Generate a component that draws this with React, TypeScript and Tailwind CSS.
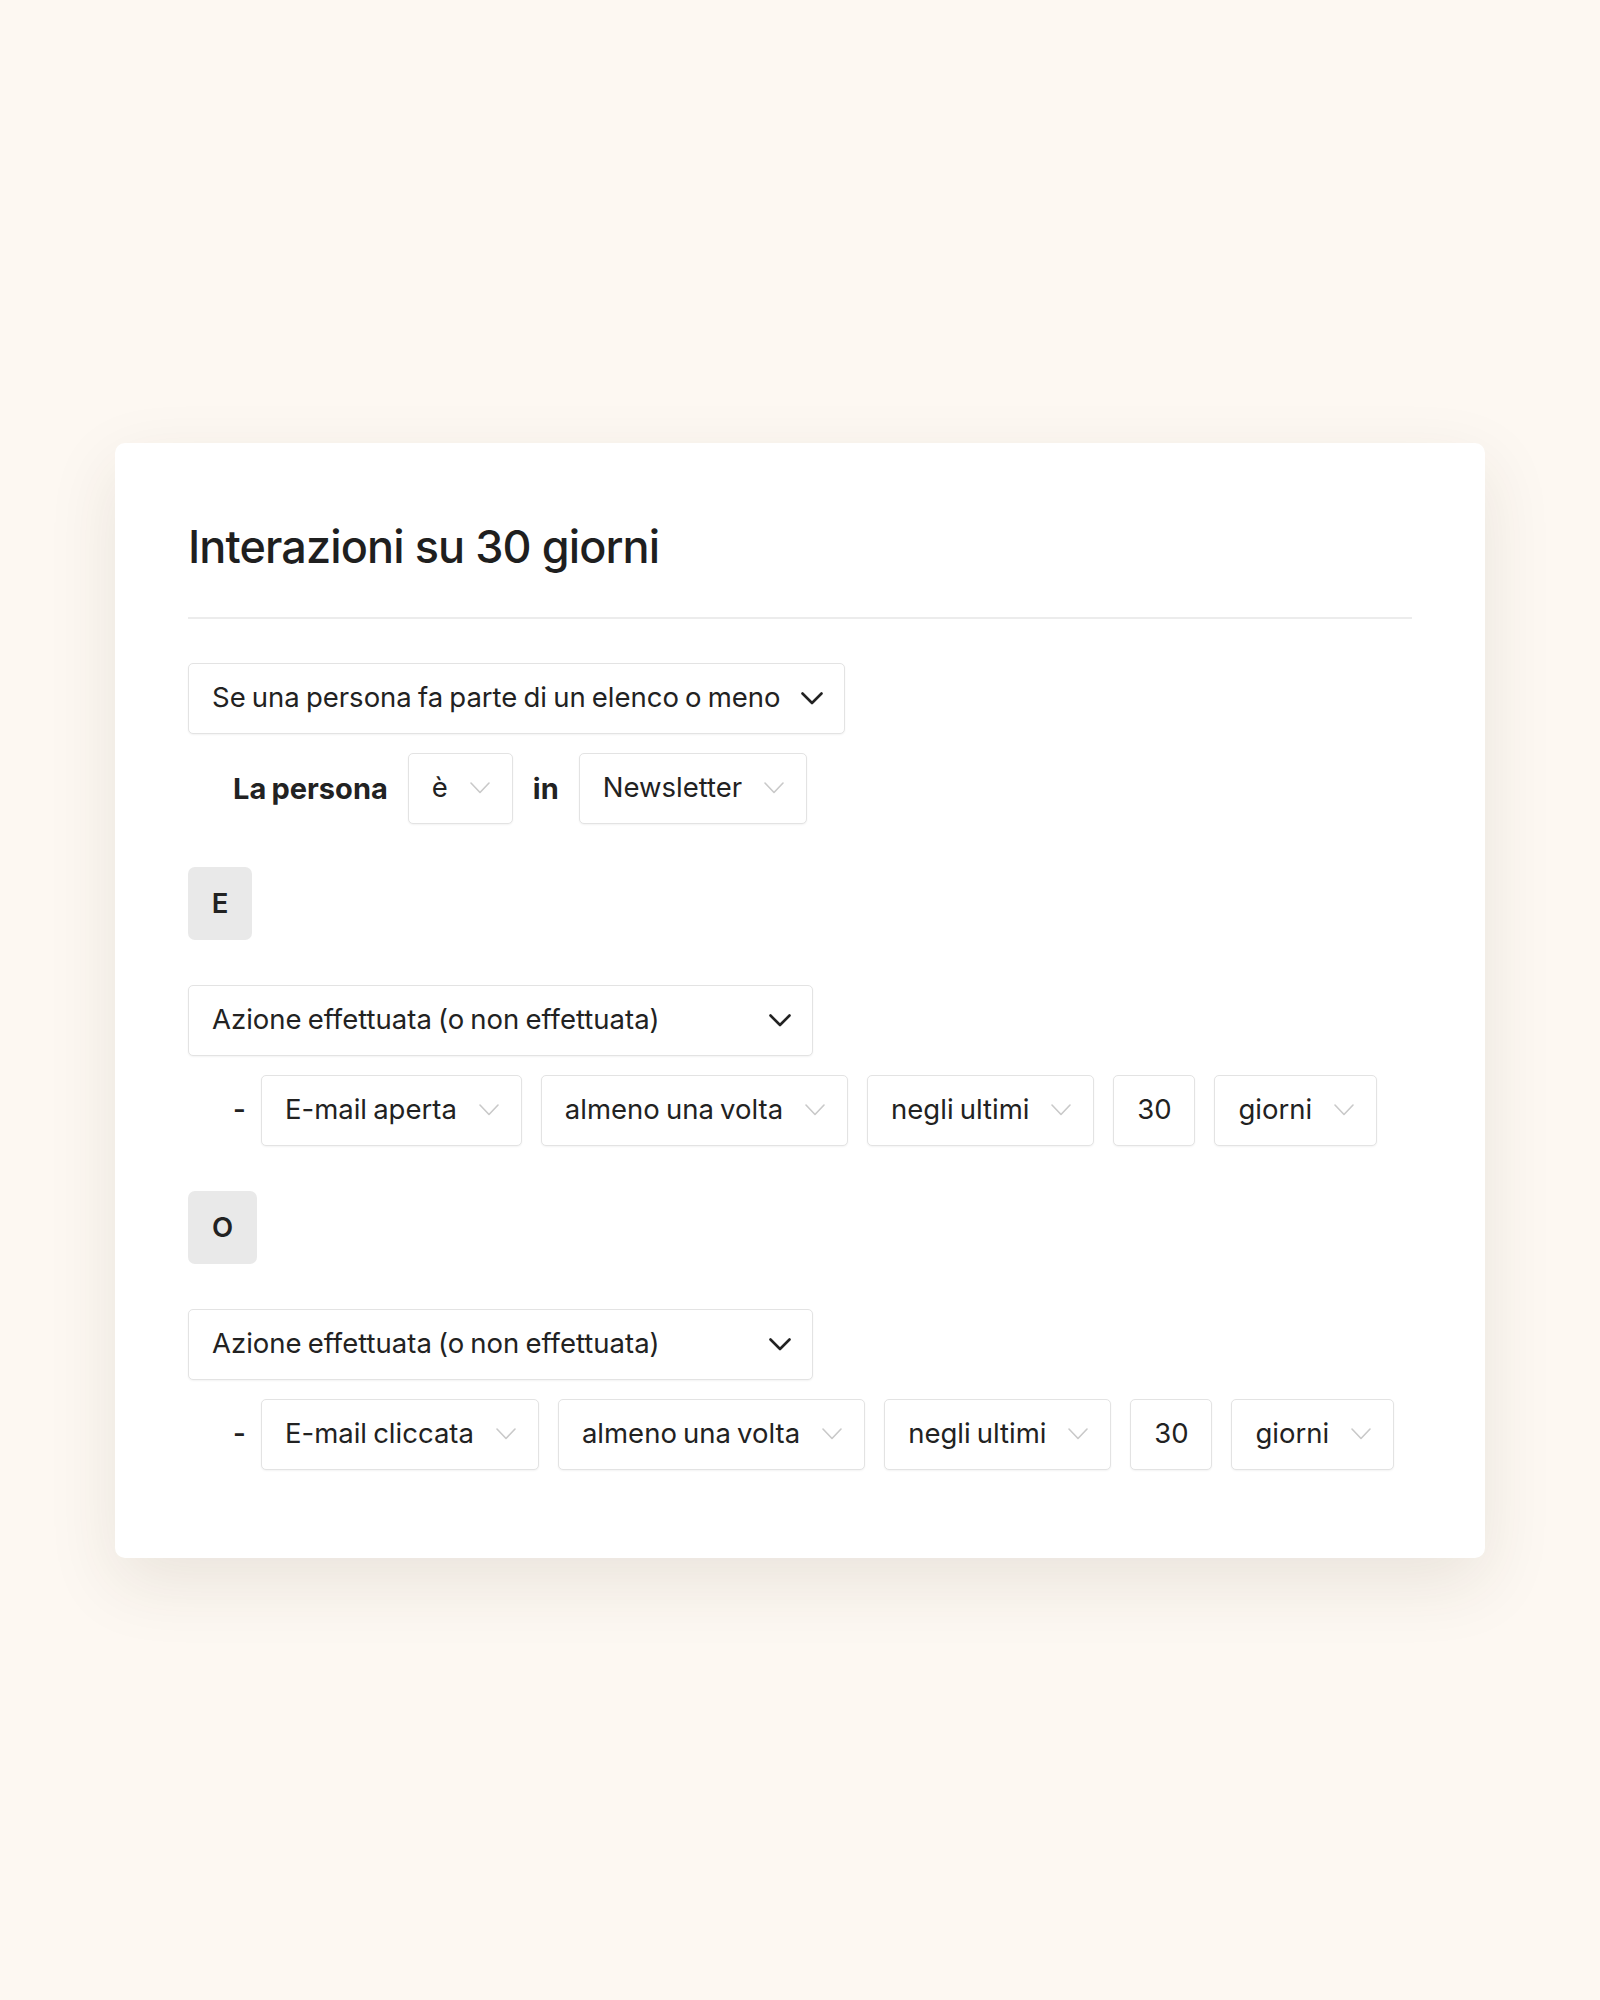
const font = "font-['Inter','Liberation_Sans',sans-serif]";

function Chevron({ light = false }: { light?: boolean }) {
  if (light) {
    return (
      <svg width="20" height="12" viewBox="0 0 20 12" fill="none" className="shrink-0">
        <polyline points="1,1 10,10.5 19,1" stroke="#c9c9c9" strokeWidth="1.6" strokeLinecap="round" strokeLinejoin="round" />
      </svg>
    );
  }
  return (
    <svg width="22" height="13" viewBox="0 0 22 13" fill="none" className="shrink-0">
      <polyline points="1.5,1.5 11,11 20.5,1.5" stroke="#222" strokeWidth="2.6" strokeLinecap="round" strokeLinejoin="round" />
    </svg>
  );
}

function MainSelect({ label, wide = false }: { label: string; wide?: boolean }) {
  return (
    <div
      className={`flex h-[71px] items-center justify-between gap-[20px] rounded-[5px] border border-[#e3e3e3] bg-white pl-[23px] pr-[21px] shadow-[0_1px_2px_rgba(0,0,0,0.05)] ${
        wide ? "w-[625px]" : "w-[657px]"
      }`}
    >
      <span className="whitespace-nowrap">{label}</span>
      <Chevron />
    </div>
  );
}

function Pill({ label }: { label: string }) {
  return (
    <div className="flex h-[71px] items-center gap-[22px] rounded-[5px] border border-[#e3e3e3] bg-white pl-[23px] pr-[22px] shadow-[0_1px_2px_rgba(0,0,0,0.05)]">
      <span className="whitespace-nowrap">{label}</span>
      <Chevron light />
    </div>
  );
}

function NumberBox({ value }: { value: string }) {
  return (
    <div className="flex h-[71px] w-[82px] items-center justify-center rounded-[5px] border border-[#e3e3e3] bg-white shadow-[0_1px_2px_rgba(0,0,0,0.05)]">
      {value}
    </div>
  );
}

function Badge({ letter, w }: { letter: string; w: string }) {
  return (
    <div className={`flex h-[73px] ${w} items-center justify-center rounded-[7px] bg-[#e9e9e9] pt-[2px] font-semibold`}>
      {letter}
    </div>
  );
}

function ActionRow({ event }: { event: string }) {
  return (
    <div className="flex items-center gap-[19px] pl-[45px]">
      <span className="w-[9px] font-semibold">-</span>
      <Pill label={event} />
      <Pill label="almeno una volta" />
      <Pill label="negli ultimi" />
      <NumberBox value="30" />
      <Pill label="giorni" />
    </div>
  );
}

export default function App() {
  return (
    <div className={`flex min-h-[2000px] w-full items-center justify-center bg-[#fdf8f2] ${font} text-[27.5px] text-[#222] [word-spacing:-1.6px]`}>
      <div className="flex w-[1370px] flex-col rounded-[10px] bg-white px-[73px] pb-[88px] pt-[77px] shadow-[0_24px_70px_rgba(60,50,30,0.10)]">
        <h1 className="text-[45px] font-medium leading-[54px] tracking-[-0.02em] text-[#1f1f1f] [word-spacing:0px]">
          Interazioni su 30 giorni
        </h1>
        <div className="mt-[43px] h-[2px] w-full bg-[#ececec]" />

        <div className="mt-[44px]">
          <MainSelect label="Se una persona fa parte di un elenco o meno" />
        </div>
        <div className="mt-[19px] flex items-center gap-[20px] pl-[45px]">
          <span className="pt-[2px] text-[29px] font-bold">La persona</span>
          <Pill label="è" />
          <span className="pt-[2px] text-[29px] font-bold">in</span>
          <Pill label="Newsletter" />
        </div>

        <div className="mt-[43px]">
          <Badge letter="E" w="w-[64px]" />
        </div>

        <div className="mt-[45px]">
          <MainSelect label="Azione effettuata (o non effettuata)" wide />
        </div>
        <div className="mt-[19px]">
          <ActionRow event="E-mail aperta" />
        </div>

        <div className="mt-[45px]">
          <Badge letter="O" w="w-[69px]" />
        </div>

        <div className="mt-[45px]">
          <MainSelect label="Azione effettuata (o non effettuata)" wide />
        </div>
        <div className="mt-[19px]">
          <ActionRow event="E-mail cliccata" />
        </div>
      </div>
    </div>
  );
}
